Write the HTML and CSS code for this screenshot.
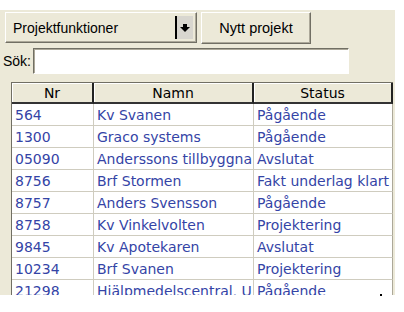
FILE: index.html
```html
<!DOCTYPE html>
<html>
<head>
<meta charset="utf-8" />
<link rel="stylesheet" href="styles.css">
</head>
<body>
<main class="panel">
  <div class="toolbar">
    <div class="combo">
      <span class="combo-text">Projektfunktioner</span>
      <span class="combo-btn">
        <svg width="10" height="10" viewBox="0 0 10 10"><rect x="3" y="1" width="4" height="3" fill="#000"/><path d="M0 4 L10 4 L5 9 Z" fill="#000"/></svg>
      </span>
    </div>
    <a href="#" class="btn">Nytt projekt</a>
  </div>
  <div class="search">
    <label for="sok">Sök:</label>
    <input type="text" id="sok" class="input" />
  </div>
  <div class="grid-wrap">
    <table class="grid">
      <colgroup><col class="c-nr"><col class="c-namn"><col class="c-status"></colgroup>
      <thead>
        <tr><th>Nr</th><th>Namn</th><th>Status</th></tr>
      </thead>
      <tbody>
        <tr><td>564</td><td>Kv Svanen</td><td>Pågående</td></tr>
        <tr><td>1300</td><td>Graco systems</td><td>Pågående</td></tr>
        <tr><td>05090</td><td>Anderssons tillbyggna</td><td>Avslutat</td></tr>
        <tr><td>8756</td><td>Brf Stormen</td><td>Fakt underlag klart</td></tr>
        <tr><td>8757</td><td>Anders Svensson</td><td>Pågående</td></tr>
        <tr><td>8758</td><td>Kv Vinkelvolten</td><td>Projektering</td></tr>
        <tr><td>9845</td><td>Kv Apotekaren</td><td>Avslutat</td></tr>
        <tr><td>10234</td><td>Brf Svanen</td><td>Projektering</td></tr>
        <tr><td>21298</td><td>Hjälpmedelscentral, U</td><td>Pågående</td></tr>
      </tbody>
    </table>
  </div>
</main>
<span class="dot"></span>
</body>
</html>
```

FILE: styles.css
```css
:root {--face: #ece9d8; --shadow: #aca899; --dark: #716f64; --line: #cfccbf; --link: #3444a6;}
html, body {margin: 0; padding: 0; background: #fff;}
body {font-family: "Liberation Sans", Arial, sans-serif; font-size: 14px; color: #000; position: relative; width: 404px; height: 312px; overflow: hidden;}
a {text-decoration: none; color: #000;}
.panel {margin-top: 10px; width: 395px; height: 285px; background: var(--face); display: flex; flex-direction: column; overflow: hidden;}
.toolbar {display: flex; align-items: flex-start; padding: 2px 0 0 5px;}
.combo {display: flex; align-items: center; width: 192px; height: 31px; box-sizing: border-box; border: 1px solid; border-color: #fff var(--dark) var(--dark) #fff; box-shadow: inset -1px -1px 0 var(--shadow);}
.combo-text {flex: 1; padding-left: 7px;}
.combo-btn {display: flex; align-items: center; justify-content: center; width: 16px; height: 23px; margin-right: 3px; background: #d8d6cf; border-left: 2px solid #000;}
.btn {display: flex; align-items: center; justify-content: center; margin-left: 4px; width: 110px; height: 32px; box-sizing: border-box; border: 1px solid; border-color: #fff var(--dark) var(--dark) #fff; box-shadow: inset -1px -1px 0 var(--shadow); font-size: 14.5px;}
.search {display: flex; align-items: center; padding: 4px 0 0 3px;}
.search label {width: 30px;}
.input {width: 316px; height: 26px; box-sizing: border-box; margin: 0; border: 1px solid; border-color: var(--dark) #fff #fff var(--dark); box-shadow: inset 1px 1px 0 var(--shadow); background: #fff; padding: 0 3px; font: inherit; outline: none;}
.grid-wrap {padding: 8px 0 0 11px;}
.grid {width: 381px; border-collapse: separate; border-spacing: 0; table-layout: fixed; border-top: 1px solid var(--dark); border-left: 1px solid var(--dark); background: #fff; font-family: "DejaVu Sans", Verdana, sans-serif; font-size: 14px;}
.c-nr {width: 82px;}
.c-namn {width: 160px;}
.c-status {width: 139px;}
.grid th {box-sizing: border-box; height: 21px; background: var(--face); font-weight: normal; padding: 0; border-right: 2px solid #222; border-bottom: 2px solid #333; box-shadow: inset 1px 1px 0 #fff;}
.grid td {box-sizing: border-box; height: 22px; padding: 0 0 0 3px; color: var(--link); border-right: 1px solid var(--line); border-bottom: 1px solid var(--line); white-space: nowrap; overflow: hidden;}
.grid td:last-child {border-right: 1px solid var(--shadow);}
.dot {position: absolute; left: 380px; top: 294px; width: 2px; height: 2px; background: #000;}
```
